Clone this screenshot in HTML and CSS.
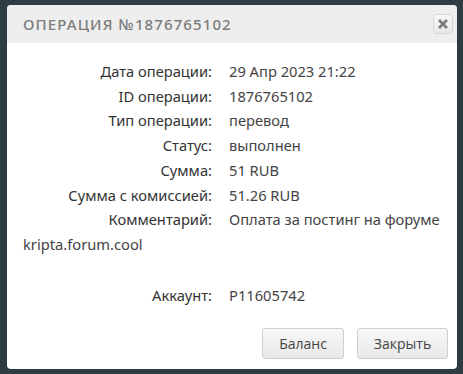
FILE: index.html
```html
<!DOCTYPE html>
<html lang="ru">
<head>
<meta charset="utf-8">
<link rel="stylesheet" href="styles.css">
</head>
<body>
<div class="modal">
  <div class="modal-header">
    <h3 class="modal-title">Операция №1876765102</h3>
    <button class="close-btn" type="button" aria-label="Закрыть">
      <svg width="10" height="10" viewBox="0 0 10 10"><path d="M2 2 L8 8 M8 2 L2 8" stroke="#7d7d7d" stroke-width="2.8" stroke-linecap="square"/></svg>
    </button>
  </div>
  <div class="modal-body">
    <div class="row"><span class="label">Дата операции:</span>29 Апр 2023 21:22</div>
    <div class="row"><span class="label">ID операции:</span>1876765102</div>
    <div class="row"><span class="label">Тип операции:</span>перевод</div>
    <div class="row"><span class="label">Статус:</span>выполнен</div>
    <div class="row"><span class="label">Сумма:</span>51 RUB</div>
    <div class="row"><span class="label">Сумма с комиссией:</span>51.26 RUB</div>
    <div class="row"><span class="label">Комментарий:</span>Оплата за постинг на форуме kripta.forum.cool</div>
    <div class="row empty"></div>
    <div class="row"><span class="label">Аккаунт:</span>P11605742</div>
  </div>
  <div class="modal-footer">
    <button class="btn" type="button">Баланс</button>
    <button class="btn" type="button">Закрыть</button>
  </div>
</div>
</body>
</html>
```

FILE: styles.css
```css
html, body {
  margin: 0;
  padding: 0;
  height: 100%;
}
body {
  background: #2e3d44;
  padding: 5px 6px 5px 7px;
  box-sizing: border-box;
  font-family: "Noto Sans", sans-serif;
}
.modal {
  background: #fff;
  border-radius: 4px;
  height: 364px;
  display: flex;
  flex-direction: column;
  overflow: hidden;
}
.modal-header {
  background: #eeeeee;
  height: 38px;
  display: flex;
  align-items: center;
  justify-content: space-between;
  padding: 0 4px 0 16px;
}
.modal-title {
  margin: 0;
  font-size: 15px;
  font-weight: 500;
  color: #7b7b7b;
  text-transform: uppercase;
  letter-spacing: 1.1px;
}
.close-btn {
  width: 20px;
  height: 20px;
  padding: 0;
  border: 1px solid #d6d6d6;
  border-radius: 3px;
  background: linear-gradient(#f8f8f8, #e8e8e8);
  display: flex;
  align-items: center;
  justify-content: center;
}
.modal-body {
  flex: 1;
  padding: 16px 16px 0 16px;
  font-size: 14.7px;
  line-height: 24.7px;
  color: #444;
}
.row {
  min-height: 24.7px;
}
.empty {
  height: 26px;
}
.label {
  display: inline-block;
  width: 189px;
  text-align: right;
  margin-right: 17px;
  color: #333;
}
.modal-footer {
  display: flex;
  justify-content: flex-end;
  gap: 13px;
  padding: 0 9px 10px 0;
}
.btn {
  height: 31px;
  padding: 0 14px;
  min-width: 82px;
  font-family: "Open Sans", sans-serif;
  font-size: 14px;
  color: #444;
  background: linear-gradient(#f7f7f7, #e9e9e9);
  border: 1px solid #cfcfcf;
  border-radius: 3px;
}
.btn:last-child {
  min-width: 91px;
}
```
